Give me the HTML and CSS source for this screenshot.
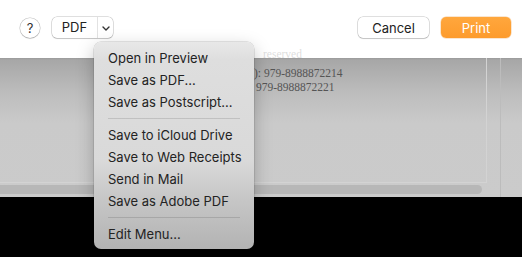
FILE: index.html
```html
<!DOCTYPE html>
<html lang="en">

<head>
  <meta charset="UTF-8">
  <meta name="viewport" content="width=device-width, initial-scale=1.0">
  <title>Print</title>
  <link rel="stylesheet" href="styles.css">
</head>

<body>
  <header class="toolbar">
    <div class="toolbar-left">
      <button class="help-button">?</button>
      <div class="split-button">
        <span class="split-main">PDF</span>
        <span class="split-arrow">
          <svg width="8" height="5" viewBox="0 0 8 5">
            <polyline points="1,1 4,4 7,1" fill="none" stroke="#333" stroke-width="1.4" stroke-linecap="round" stroke-linejoin="round" />
          </svg>
        </span>
      </div>
    </div>
    <div class="toolbar-right">
      <button class="button">Cancel</button>
      <button class="button primary">Print</button>
    </div>
  </header>

  <main class="preview">
    <div class="sheet-column">
      <div class="page">
        <div class="page-text">
          <p class="line-1">reserved</p>
          <p>): 979-8988872214</p>
          <p class="line-3">979-8988872221</p>
        </div>
      </div>
      <div class="hscroll">
        <div class="hscroll-thumb"></div>
      </div>
    </div>
    <div class="side-column"></div>
  </main>

  <footer class="backdrop"></footer>

  <!-- dropdown from the PDF button -->
  <ul class="menu">
    <li>Open in Preview</li>
    <li>Save as PDF...</li>
    <li>Save as Postscript...</li>
    <li class="separator"></li>
    <li>Save to iCloud Drive</li>
    <li>Save to Web Receipts</li>
    <li>Send in Mail</li>
    <li>Save as Adobe PDF</li>
    <li class="separator"></li>
    <li>Edit Menu...</li>
  </ul>
</body>

</html>
```

FILE: styles.css
```css
body {
  margin: 0;
  padding: 0;
  height: 257px;
  overflow: hidden;
  display: flex;
  flex-direction: column;
  background-color: #ffffff;
  font-family: Inter, "Liberation Sans", sans-serif;
  font-size: 13px;
  color: #222222;
}

.toolbar {
  position: relative;
  z-index: 1;
  height: 58px;
  box-sizing: border-box;
  padding: 17px 11px 0 20px;
  display: flex;
  justify-content: space-between;
  align-items: flex-start;
  background-color: rgba(255, 255, 255, 0.8);
}

.toolbar-left,
.toolbar-right {
  display: flex;
  align-items: center;
  gap: 12px;
}

button {
  font-family: inherit;
  font-size: 13px;
  border: none;
  padding: 0;
  cursor: pointer;
}

.help-button {
  width: 20px;
  height: 20px;
  border-radius: 50%;
  background-color: #ffffff;
  color: #333333;
  box-shadow: 0 0 0 0.5px rgba(0, 0, 0, 0.25), 0 1px 1px rgba(0, 0, 0, 0.12);
}

.split-button {
  display: flex;
  width: 61px;
  height: 21px;
  border-radius: 5px;
  background-color: #ffffff;
  box-shadow: 0 0 0 0.5px rgba(0, 0, 0, 0.25), 0 1px 1px rgba(0, 0, 0, 0.12);
}

.split-main {
  width: 45px;
  line-height: 21px;
  text-align: center;
}

.split-arrow {
  flex: 1;
  display: flex;
  align-items: center;
  justify-content: center;
  border-left: 1px solid #e2e2e2;
  padding-top: 1px;
}

.button {
  width: 71px;
  height: 21px;
  border-radius: 5px;
  background-color: #ffffff;
  color: #222222;
  box-shadow: 0 0 0 0.5px rgba(0, 0, 0, 0.25), 0 1px 1px rgba(0, 0, 0, 0.12);
}

.button.primary {
  width: 70px;
  color: #ffffff;
  background: linear-gradient(#ffa73d, #fd9b2c);
  box-shadow: 0 0 0 0.5px rgba(230, 130, 20, 0.4);
}

.preview {
  height: 139px;
  display: flex;
  background: linear-gradient(180deg, #9a9a9a 0, #a7a7a7 2px, #bdbdbd 35px, #cacaca 65px, #cbcbcb 100%);
}

.sheet-column {
  width: 501px;
  box-sizing: border-box;
  border-right: 1px solid #bcbcbc;
  display: flex;
  flex-direction: column;
}

.page {
  height: 125px;
  width: 487px;
  box-sizing: border-box;
  border-right: 1px solid #d3d3d3;
  border-bottom: 1px solid #d3d3d3;
}

.page-text {
  margin: -11px 0 0 254px;
  font-family: "Liberation Serif", serif;
  font-size: 11.5px;
  line-height: 14px;
  color: #555555;
}

.page-text p {
  margin: 0;
  white-space: nowrap;
}

.page-text .line-1 {
  padding-left: 9px;
  margin-bottom: 5px;
}

.page-text .line-3 {
  padding-left: 2px;
}

.hscroll {
  flex: 1;
  padding-top: 2px;
}

.hscroll-thumb {
  width: 482px;
  height: 9px;
  border-radius: 0 5px 5px 0;
  background-color: #b7b7b7;
}

.side-column {
  flex: 1;
}

.backdrop {
  flex: 1;
  background-color: #000000;
}

.menu {
  position: absolute;
  z-index: 2;
  left: 94px;
  top: 42px;
  width: 160px;
  height: 207px;
  box-sizing: border-box;
  margin: 0;
  padding: 5px 0 4px;
  list-style: none;
  border-radius: 7px;
  background: linear-gradient(180deg, #e8e8e8 0, #dedede 18px, #d9d9d9 120px, #c6c6c6 158px, #b3b3b3 100%);
  box-shadow: 0 0 0 0.5px rgba(0, 0, 0, 0.18), 0 6px 18px rgba(0, 0, 0, 0.25);
  color: #232323;
}

.menu li {
  height: 22px;
  line-height: 22px;
  padding-left: 14px;
}

.menu li.separator {
  height: 1px;
  margin: 5px 14px;
  padding: 0;
  background-color: rgba(0, 0, 0, 0.12);
}
```
